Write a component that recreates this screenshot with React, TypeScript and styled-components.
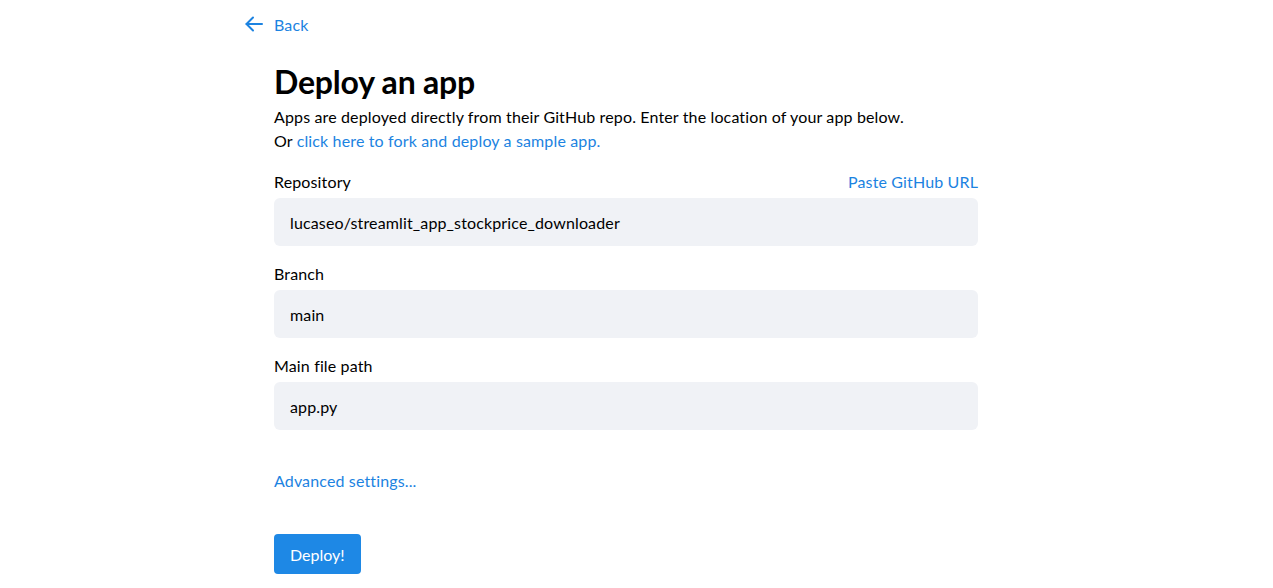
import React from "react";
import styled, { createGlobalStyle } from "styled-components";

const Global = createGlobalStyle`
  html, body { margin: 0; padding: 0; background: #ffffff; }
  body { font-family: "Lato", "Noto Sans", sans-serif; color: #000000; letter-spacing: 0.14px; -webkit-font-smoothing: antialiased; }
  * { box-sizing: border-box; }
`;

const Page = styled.div`
  width: 1273px;
  display: flex;
  flex-direction: column;
  padding: 12px 0 0 242px;
`;

const BackLink = styled.a`
  display: flex;
  align-items: center;
  gap: 8px;
  height: 24px;
  color: #1c83e1;
  font-size: 16px;
  text-decoration: none;
  cursor: pointer;
`;

const Content = styled.main`
  width: 704px;
  margin-left: 32px;
  display: flex;
  flex-direction: column;
`;

const Title = styled.h1`
  margin: 23px 0 0;
  font-size: 32px;
  line-height: 46px;
  font-weight: 700;
  letter-spacing: -0.2px;
  color: #000000;
`;

const Para = styled.p`
  margin: 0;
  font-size: 16px;
  line-height: 24px;
  color: #000000;
`;

const Link = styled.a`
  color: #1c83e1;
  text-decoration: none;
`;

const Form = styled.div`
  display: flex;
  flex-direction: column;
  gap: 15px;
  margin-top: 16px;
`;

const Field = styled.div`
  display: flex;
  flex-direction: column;
  gap: 5px;
`;

const LabelRow = styled.div`
  display: flex;
  justify-content: space-between;
  align-items: center;
  height: 24px;
  font-size: 16px;
  color: #000000;
`;

const Input = styled.div`
  height: 48px;
  background: #f0f2f6;
  border-radius: 6px;
  padding: 0 16px;
  display: flex;
  align-items: center;
  font-size: 16px;
  color: #000000;
`;

const Advanced = styled(Link)`
  margin-top: 39px;
  font-size: 16px;
  line-height: 24px;
  align-self: flex-start;
`;

const Button = styled.button`
  margin-top: 41px;
  align-self: flex-start;
  height: 40px;
  padding: 0 16px;
  border: none;
  border-radius: 4px;
  background: #1e88e5;
  color: #ffffff;
  font-family: inherit;
  font-size: 16px;
  letter-spacing: 0;
`;

const ArrowIcon = () => (
  <svg width="24" height="24" viewBox="0 0 24 24" fill="none" stroke="#1c83e1" strokeWidth="2" strokeLinecap="round" strokeLinejoin="round">
    <path d="M20 12H4.5" />
    <path d="M11 5.5L4.5 12l6.5 6.5" />
  </svg>
);

const fields = [
  { label: "Repository", value: "lucaseo/streamlit_app_stockprice_downloader", extra: "Paste GitHub URL" },
  { label: "Branch", value: "main" },
  { label: "Main file path", value: "app.py" },
];

export default function App() {
  return (
    <>
      <Global />
      <Page>
        <BackLink>
          <ArrowIcon />
          <span>Back</span>
        </BackLink>
        <Content>
          <Title>Deploy an app</Title>
          <Para>Apps are deployed directly from their GitHub repo. Enter the location of your app below.</Para>
          <Para>
            Or <Link>click here to fork and deploy a sample app.</Link>
          </Para>
          <Form>
            {fields.map((f) => (
              <Field key={f.label}>
                <LabelRow>
                  <span>{f.label}</span>
                  {f.extra && <Link>{f.extra}</Link>}
                </LabelRow>
                <Input>{f.value}</Input>
              </Field>
            ))}
          </Form>
          <Advanced>Advanced settings...</Advanced>
          <Button>Deploy!</Button>
        </Content>
      </Page>
    </>
  );
}
